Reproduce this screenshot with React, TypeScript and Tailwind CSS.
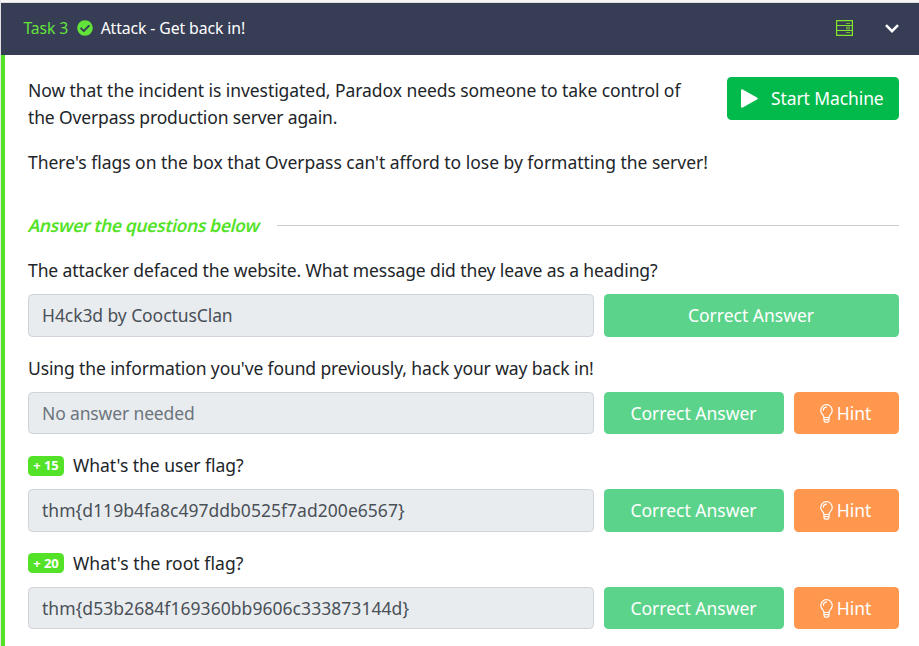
import type { ReactNode } from "react";

const Bulb = () => (
  <svg className="h-[19px] w-[13px] shrink-0" viewBox="0 0 13 19" fill="none" stroke="white" strokeWidth="1.2" strokeLinecap="round">
    <path d="M4 13.500C4 11 .8 10.200.8 6.400A5.700 5.700 0 0 1 12.200 6.400C12.200 10.200 9 11 9 13.500Z" />
    <path d="M3.400 6.300A3.100 3.100 0 0 1 6.500 3.200M4 13.700v3.200l1 1.200h3l1-1.200v-3.200M4.200 15.700h4.600" />
  </svg>
);

const Check = () => (
  <svg className="ml-[8.500px] h-4 w-4 shrink-0" viewBox="0 0 512 512" fill="#62e33a">
    <path d="M504 256c0 137-111 248-248 248S8 393 8 256 119 8 256 8s248 111 248 248zM227.300 387.300l184-184c6.200-6.200 6.200-16.400 0-22.600l-22.600-22.600c-6.200-6.200-16.400-6.200-22.600 0L216 308.100l-70.100-70.100c-6.200-6.200-16.400-6.200-22.600 0l-22.600 22.600c-6.200 6.200-6.200 16.400 0 22.600l104 104c6.200 6.200 16.400 6.200 22.600.1z" />
  </svg>
);

const Server = () => (
  <svg className="h-4 w-[17px]" viewBox="0 0 17 16" fill="none" stroke="#83e62c" strokeWidth="1.200">
    <path d="M.6.6h15.800v14.800H.6zM.6 5.500h15.800M.6 10.500h15.800" />
    <path d="M10 3.500h4M10 12.500h4" strokeWidth="1" opacity=".75" />
    <path d="M10 8h4" strokeWidth="3" opacity=".55" />
  </svg>
);

type RowProps = {
  question: ReactNode;
  points?: string;
  answer: ReactNode;
  muted?: boolean;
  hint?: boolean;
};

function Row({ question, points, answer, muted, hint }: RowProps) {
  return (
    <div className="mb-[18px]">
      <div className="flex h-[27px] items-center">
        {points && (
          <span className="mr-[9px] flex h-5 w-9 items-center justify-center rounded-[4.500px] bg-[#54e228] text-[13px] font-bold tracking-[-0.1px] text-white">
            {points}
          </span>
        )}
        {question}
      </div>
      <div className="mt-[10px] flex h-[42.500px] gap-[10px]">
        <div className={`flex w-[566px] items-center rounded-[4.500px] border border-[#ced4da] bg-[#e9ecef] pt-[0.250px] pl-[13px] ${muted ? "text-[#6c757d]" : "text-[#495057]"}`}>
          {answer}
        </div>
        <div className="flex flex-1 items-center justify-center rounded-[4.500px] bg-[#5bd38b] pt-[0.250px] pr-px text-white">
          <span>Correct Answer</span>
        </div>
        {hint && (
          <div className="flex w-[105px] items-center justify-center gap-1 rounded-[4.500px] bg-[#ff974f] pt-[0.250px] pr-[2px] text-white">
            <Bulb />
            <span>Hint</span>
          </div>
        )}
      </div>
    </div>
  );
}

export default function App() {
  return (
    <div className="h-[646px] overflow-hidden border-l border-[#e4e4e4] bg-white font-['Noto_Sans',sans-serif] text-[17.500px] leading-[27px] whitespace-nowrap text-[#212529]">
      <div className="h-[3px] border-b border-[#dedede] bg-[#f7f7f7]" />
      <header className="flex h-[52px] items-center bg-[#383d56] pr-5 pb-[2px] pl-[22.500px] text-[15.800px] text-white">
        <span className="tracking-[-0.150px] text-[#62e33a]">Task 3</span>
        <Check />
        <span className="ml-2 tracking-[-0.110px]">Attack - Get back in!</span>
        <div className="ml-auto flex items-center gap-[32px]">
          <Server />
          <svg className="h-[9px] w-[14px]" viewBox="0 0 14 9" fill="none" stroke="white" strokeWidth="2.500">
            <path d="M1 1.200l6 6 6-6" />
          </svg>
        </div>
      </header>
      <main className="h-[591px] border-l-4 border-[#54e228] pt-[22px] pr-5 pl-[23px]">
        <div className="flex justify-between">
          <div>
            <p>
              <span className="tracking-[-0.060px]">Now that the incident is investigated, Paradox needs someone to take control of</span>
              <br />
              <span className="tracking-[-0.140px]">the Overpass production server again.</span>
            </p>
            <p className="mt-[18px]">
              <span className="tracking-[-0.020px]">There's flags on the box that Overpass can't afford to lose by formatting the server!</span>
            </p>
          </div>
          <div className="-ml-4 flex h-[43px] w-[172px] shrink-0 items-center rounded-[4.500px] bg-[#02b94b] pl-[14px] text-white">
            <svg className="h-[19px] w-[17px]" viewBox="0 0 17 19" fill="white">
              <path d="M0 1.500Q0-.4 1.700.5L16 8.500Q17.400 9.500 16 10.400L1.700 18.500Q0 19.200 0 17.600Z" />
            </svg>
            <span className="ml-[13px] tracking-[-0.1px]">Start Machine</span>
          </div>
        </div>
        <div className="mt-[35.500px] mb-[18.700px] flex h-[27px] items-center">
          <div className="w-[249px]">
            <span className="inline-block -skew-x-14 pl-px font-semibold tracking-[-0.380px] text-[#54e228]">Answer the questions below</span>
          </div>
          <div className="h-px flex-1 bg-[#cccccc]" />
        </div>
        <Row
          question={<span className="tracking-[-0.1px]">The attacker defaced the website. What message did they leave as a heading?</span>}
          answer={<span className="tracking-[-0.080px]">H4ck3d by CooctusClan</span>}
        />
        <Row
          question={<span className="tracking-[-0.120px]">Using the information you've found previously, hack your way back in!</span>}
          answer={<span className="tracking-[-0.140px]">No answer needed</span>}
          muted
          hint
        />
        <Row
          points="+ 15"
          question={<span className="tracking-[-0.020px]">What's the user flag?</span>}
          answer={<span className="tracking-[0.030px]">{"thm{d119b4fa8c497ddb0525f7ad200e6567}"}</span>}
          hint
        />
        <Row
          points="+ 20"
          question={<span className="tracking-[0.060px]">What's the root flag?</span>}
          answer={<span className="tracking-[0.050px]">{"thm{d53b2684f169360bb9606c333873144d}"}</span>}
          hint
        />
      </main>
    </div>
  );
}
